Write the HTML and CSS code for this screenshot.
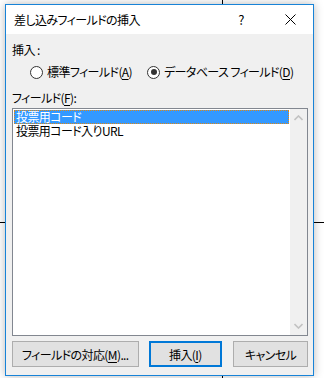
FILE: index.html
```html
<!DOCTYPE html>
<html lang="ja">
<head>
  <meta charset="UTF-8" />
  <meta name="viewport" content="width=device-width, initial-scale=1.0"/>
  <title>差し込みフィールドの挿入</title>
  <link rel="stylesheet" href="styles.css">
</head>
<body>
  <div class="dialogo">
    <!-- Barra de título -->
    <div class="titulo">
      <span class="titulo-texto">差し込みフィールドの挿入</span>
      <span class="btn-ajuda">?</span>
      <span class="btn-fechar">
        <svg width="11" height="11" viewBox="0 0 11 11"><path d="M0.5 0.5 L10.5 10.5 M10.5 0.5 L0.5 10.5" stroke="#000" stroke-width="1" fill="none"/></svg>
      </span>
    </div>

    <div class="corpo">
      <p class="rotulo">挿入 :</p>

      <!-- Opções de tipo de campo -->
      <div class="opcoes">
        <label class="opcao"><span class="radio"></span><span>標準フィールド(<u>A</u>)</span></label>
        <label class="opcao"><span class="radio marcado"></span><span>データベース フィールド(<u>D</u>)</span></label>
      </div>

      <p class="rotulo rotulo-lista">フィールド(<u>F</u>):</p>

      <!-- Lista de campos -->
      <div class="lista">
        <ul class="itens">
          <li class="selecionado">投票用コード</li>
          <li>投票用コード入りURL</li>
        </ul>
        <div class="rolagem">
          <svg width="9" height="6" viewBox="0 0 9 6"><path d="M0.5 5 L4.5 1 L8.5 5" stroke="#c2c2c2" stroke-width="1.6" fill="none"/></svg>
          <svg width="9" height="6" viewBox="0 0 9 6"><path d="M0.5 1 L4.5 5 L8.5 1" stroke="#c2c2c2" stroke-width="1.6" fill="none"/></svg>
        </div>
      </div>

      <!-- Botões -->
      <div class="botoes">
        <button class="btn btn-largo">フィールドの対応(<u>M</u>)...</button>
        <button class="btn btn-padrao">挿入(<u>I</u>)</button>
        <button class="btn btn-cancelar">キャンセル</button>
      </div>
    </div>
  </div>
</body>
</html>
```

FILE: styles.css
```css
/* Fundo com as linhas da página por trás */
body {
  margin: 0;
  width: 324px;
  height: 378px;
  overflow: hidden;
  font-family: "Noto Sans CJK JP", sans-serif;
  font-size: 12px;
  font-feature-settings: "palt";
  letter-spacing: -0.6px;
  color: #000;
  background:
    linear-gradient(#000, #000) 222px 0 / 1px 378px no-repeat,
    linear-gradient(#000, #000) 0 222px / 324px 1px no-repeat,
    #fff;
}

p {
  margin: 0;
}

u {
  text-decoration-thickness: 1px;
  text-underline-offset: 2px;
}

/* Janela do diálogo */
.dialogo {
  margin: 4px 0 0 5px;
  width: 307px;
  height: 370px;
  border: 1px solid #1883d7;
  display: flex;
  flex-direction: column;
  box-shadow: 0 0 9px rgba(0, 0, 0, 0.28);
}

.titulo {
  height: 29px;
  background: #fff;
  display: flex;
  align-items: center;
  padding-left: 8px;
}

.titulo-texto {
  flex: 1;
  line-height: 16px;
  margin-top: 1px;
}

.btn-ajuda {
  width: 10px;
  text-align: center;
  margin-right: 39px;
  font-size: 13px;
}

.btn-fechar {
  display: flex;
  margin-right: 17px;
}

/* Área cinza */
.corpo {
  flex: 1;
  background: #f0f0f0;
  padding: 8px 5px 0 6px;
}

.rotulo {
  line-height: 16px;
}

.opcoes {
  display: flex;
  margin: 6px 0 0 18px;
  line-height: 16px;
  white-space: nowrap;
}

.opcao {
  display: flex;
  align-items: center;
  gap: 4px;
}

.opcao + .opcao {
  margin-left: 15px;
}

.radio {
  width: 11px;
  height: 11px;
  border: 1px solid #333;
  border-radius: 50%;
  background: #fff;
  position: relative;
  flex-shrink: 0;
}

.radio.marcado::after {
  content: "";
  position: absolute;
  left: 2.5px;
  top: 2.5px;
  width: 6px;
  height: 6px;
  border-radius: 50%;
  background: #333;
}

.rotulo-lista {
  margin-top: 10px;
}

/* Caixa de lista */
.lista {
  margin-top: 2px;
  height: 226px;
  border: 1px solid #828790;
  background: #fff;
  display: flex;
}

.itens {
  list-style: none;
  margin: 0;
  padding: 1px 1px 0 1px;
  flex: 1;
}

.itens li {
  height: 14px;
  line-height: 14px;
  padding-left: 2px;
}

.itens li.selecionado {
  background: #3399ff;
  color: #fff;
  outline: 1px dotted #e2870f;
  outline-offset: -1px;
}

.rolagem {
  width: 17px;
  background: #f0f0f0;
  display: flex;
  flex-direction: column;
  justify-content: space-between;
  align-items: center;
  padding: 6px 0 6px;
}

/* Botões de baixo */
.botoes {
  display: flex;
  gap: 10px;
  margin-top: 5px;
}

.btn {
  height: 26px;
  font-family: inherit;
  font-size: 12px;
  font-feature-settings: "palt";
  letter-spacing: -0.6px;
  background: #e1e1e1;
  border: 1px solid #adadad;
  padding: 0;
  color: #000;
}

.btn-largo {
  width: 127px;
}

.btn-padrao {
  width: 74px;
  border: 2px solid #0078d7;
}

.btn-cancelar {
  width: 75px;
  margin-left: 1px;
}
```
